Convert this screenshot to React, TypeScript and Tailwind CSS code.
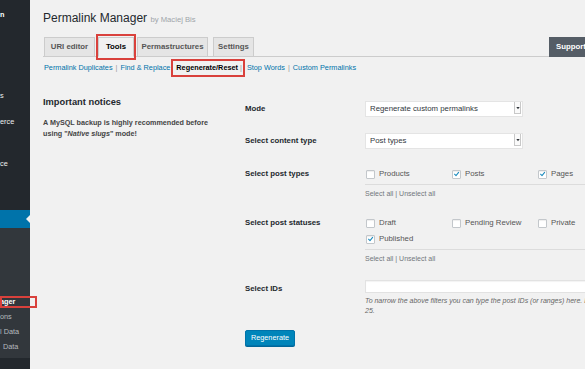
import React from "react";

const Check = ({ checked }: { checked?: boolean }) => (
  <span className="inline-flex h-[9px] w-[9px] shrink-0 items-center justify-center rounded-[1px] border border-[#c3c7cb] bg-white shadow-[inset_0_1px_1px_rgba(0,0,0,0.07)]">
    {checked && (
      <svg viewBox="0 0 10 10" className="h-[8px] w-[8px]">
        <path d="M2.2 5.3 L4.3 7.4 L8 2.6" fill="none" stroke="#1e8cbe" strokeWidth="1.5" strokeLinecap="round" strokeLinejoin="round" />
      </svg>
    )}
  </span>
);

const CheckItem = ({ label, checked }: { label: string; checked?: boolean }) => (
  <div className="flex h-[16px] items-center gap-[4px] whitespace-nowrap text-[7.8px] text-[#555]">
    <Check checked={checked} />
    <span>{label}</span>
  </div>
);

const Select = ({ value }: { value: string }) => (
  <div className="flex h-[16px] w-[158px] items-start border border-[#e4e4e4] bg-white pl-[4px] text-[7.8px] text-[#32373c]">
    <span className="flex-1 self-center whitespace-nowrap">{value}</span>
    <span className="mr-[1px] flex h-[12px] w-[7px] items-center justify-center border-b border-l border-r border-[#c8c8c8] bg-[#fafafa]">
      <svg viewBox="0 0 6 6" className="h-[4px] w-[4px]">
        <path d="M0.5 1.5 L5.5 1.5 L3 5 Z" fill="#32373c" />
      </svg>
    </span>
  </div>
);

export default function App() {
  return (
    <div className="flex h-[369px] w-[585px] overflow-hidden bg-[#f1f1f1] font-['Liberation_Sans',Arial,sans-serif]">
      {/* Sidebar */}
      <aside className="flex w-[30px] shrink-0 flex-col bg-[#23282d] text-[7.3px] text-[#eee]">
        <div className="flex h-[210px] flex-col">
          <div className="mt-[10px] h-[10px] whitespace-nowrap font-bold leading-[10px] text-white">n</div>
          <div className="mt-[71px] h-[10px] whitespace-nowrap leading-[10px]">s</div>
          <div className="mt-[16px] h-[10px] whitespace-nowrap leading-[10px]">erce</div>
          <div className="mt-[32px] h-[10px] whitespace-nowrap leading-[10px]">ce</div>
        </div>
        <div className="relative h-[18px] bg-[#0073aa]">
          <span className="absolute right-0 top-[5px] h-0 w-0 border-y-[4px] border-r-[4px] border-y-transparent border-r-[#f1f1f1]" />
        </div>
        <div className="flex h-[130px] flex-col bg-[#32373c] pt-[66px] text-[#b4b9be]">
          <div className="relative h-[15px] whitespace-nowrap font-bold leading-[15px] text-white">
            ager
            <span className="absolute left-0 top-[2px] z-10 h-[12px] w-[37px] border-2 border-[#d9413c]" />
          </div>
          <div className="h-[15px] whitespace-nowrap leading-[15px]">ons</div>
          <div className="h-[15px] whitespace-nowrap leading-[15px]">l Data</div>
          <div className="h-[15px] whitespace-nowrap pl-[3px] leading-[15px]">Data</div>
        </div>
        <div className="flex-1 bg-[#23282d]" />
      </aside>

      {/* Main */}
      <main className="relative min-w-0 flex-1 overflow-hidden bg-[#f1f1f1] pl-[13px] pt-[10px]">
        <h1 className="whitespace-nowrap text-[12px] leading-[16px] text-[#23282d]">
          Permalink Manager <span className="text-[7.7px] text-[#a0a5aa]">by Maciej Bis</span>
        </h1>

        <div className="mt-[9px] flex h-[20px] items-end gap-[3px] border-b border-[#ccc] pl-[1px]">
          <div className="-mb-px flex h-[20px] w-[51px] items-center justify-center whitespace-nowrap border border-[#ccc] bg-[#e5e5e5] text-[7.8px] font-bold text-[#555]">
            URI editor
          </div>
          <div className="relative -mb-px flex h-[20px] w-[36px] items-center justify-center whitespace-nowrap border border-[#ccc] border-b-[#f1f1f1] bg-[#f1f1f1] text-[7.8px] font-bold text-[#000]">
            Tools
            <span className="absolute -bottom-[4px] -left-[3px] -right-[3px] -top-[4px] border-2 border-[#d9413c]" />
          </div>
          <div className="-mb-px flex h-[20px] w-[71px] items-center justify-center whitespace-nowrap border border-[#ccc] bg-[#e5e5e5] text-[7.8px] font-bold text-[#555]">
            Permastructures
          </div>
          <div className="-mb-px ml-[2px] flex h-[20px] w-[41px] items-center justify-center whitespace-nowrap border border-[#ccc] bg-[#e5e5e5] text-[7.8px] font-bold text-[#555]">
            Settings
          </div>
          <div className="-mb-px ml-auto flex h-[20px] w-[36px] items-center overflow-hidden whitespace-nowrap bg-[#555d66] pl-[7px] text-[7.8px] font-bold text-white">
            Support
          </div>
        </div>

        <div className="mt-[2px] flex h-[18px] items-center whitespace-nowrap pl-[1px] text-[7.3px]">
          <span className="text-[#0073aa]">Permalink Duplicates</span>
          <span className="mx-[3px] text-[#999]">|</span>
          <span className="text-[#0073aa]">Find &amp; Replace</span>
          <span className="ml-[1px] flex h-[18px] items-center border-2 border-[#d9413c] pl-[3px] pr-[1px]">
            <span className="font-bold text-[#000]">Regenerate/Reset</span>
            <span className="ml-[2px] text-[#999]">|</span>
          </span>
          <span className="ml-[2px] text-[#0073aa]">Stop Words</span>
          <span className="mx-[3px] text-[#999]">|</span>
          <span className="text-[#0073aa]">Custom Permalinks</span>
        </div>

        <div className="mt-[19px] flex items-start">
          <div className="w-[202px] shrink-0">
            <h3 className="h-[12px] whitespace-nowrap text-[9.3px] font-bold leading-[12px] text-[#23282d]">Important notices</h3>
            <p className="mt-[9px] w-[175px] text-[7.2px] font-bold leading-[11px] text-[#444]">
              A MySQL backup is highly recommended before using "<em>Native slugs</em>" mode!
            </p>
          </div>

          <div className="flex min-w-0 flex-1 flex-col pt-[5px]">
            <div className="flex h-[16px] items-center">
              <div className="w-[120px] shrink-0 text-[7.8px] font-bold text-[#23282d]">Mode</div>
              <Select value="Regenerate custom permalinks" />
            </div>
            <div className="mt-[16px] flex h-[16px] items-center">
              <div className="w-[120px] shrink-0 text-[7.8px] font-bold text-[#23282d]">Select content type</div>
              <Select value="Post types" />
            </div>

            <div className="mt-[17px] flex items-start">
              <div className="h-[16px] w-[120px] shrink-0 text-[7.8px] font-bold leading-[16px] text-[#23282d]">Select post types</div>
              <div className="min-w-0 flex-1">
                <div className="grid grid-cols-[86px_86px_86px] pl-[1px]">
                  <CheckItem label="Products" />
                  <CheckItem label="Posts" checked />
                  <CheckItem label="Pages" checked />
                </div>
                <div className="mt-[2px] border-t border-[#dcdcdc]" />
                <div className="mt-[4px] h-[10px] whitespace-nowrap text-[7px] leading-[10px] text-[#72777c]">Select all | Unselect all</div>
              </div>
            </div>

            <div className="mt-[16px] flex items-start">
              <div className="h-[16px] w-[120px] shrink-0 text-[7.8px] font-bold leading-[16px] text-[#23282d]">Select post statuses</div>
              <div className="min-w-0 flex-1">
                <div className="grid grid-cols-[86px_86px_86px] pl-[1px]">
                  <CheckItem label="Draft" />
                  <CheckItem label="Pending Review" />
                  <CheckItem label="Private" />
                  <CheckItem label="Published" checked />
                </div>
                <div className="mt-[2px] border-t border-[#dcdcdc]" />
                <div className="mt-[4px] h-[10px] whitespace-nowrap text-[7px] leading-[10px] text-[#72777c]">Select all | Unselect all</div>
              </div>
            </div>

            <div className="mt-[16px] flex items-start">
              <div className="mt-[4px] h-[10px] w-[120px] shrink-0 text-[7.8px] font-bold leading-[10px] text-[#23282d]">Select IDs</div>
              <div className="min-w-0 flex-1">
                <div className="h-[13px] w-[300px] border border-[#e2e2e2] bg-white shadow-[inset_0_1px_1px_rgba(0,0,0,0.05)]" />
                <div className="mt-[3px] whitespace-nowrap text-[7px] italic leading-[10px] text-[#666]">
                  To narrow the above filters you can type the post IDs (or ranges) here. Eg. 1-8, 10,
                  <br />
                  25.
                </div>
              </div>
            </div>

            <div className="mt-[14px] flex h-[16px] w-[50px] items-center justify-center rounded-[2px] border border-[#0073aa] bg-[#0085ba] text-[7.3px] text-white shadow-[0_1px_0_#006799]">
              Regenerate
            </div>
          </div>
        </div>
      </main>
    </div>
  );
}
